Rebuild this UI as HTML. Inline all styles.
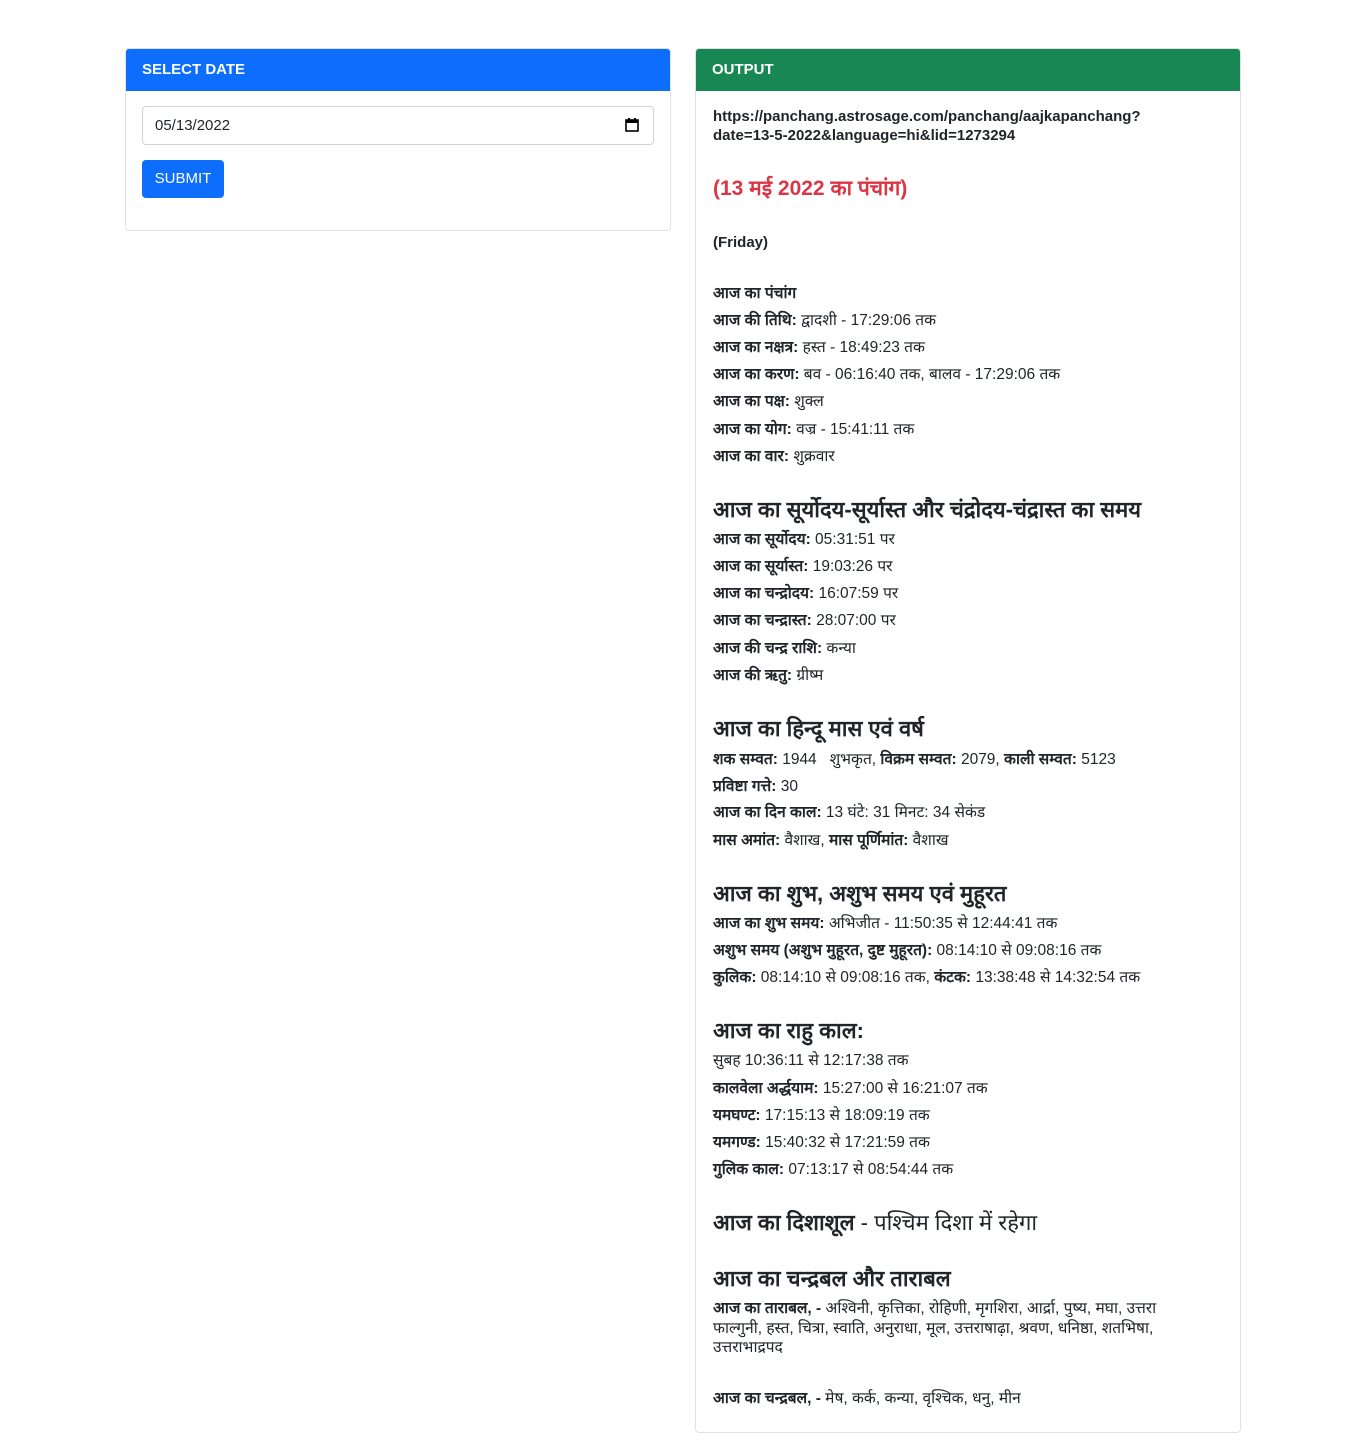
<!DOCTYPE html>
<html><head><meta charset="utf-8"><style>
*{box-sizing:border-box;margin:0;padding:0}
body{width:1366px;height:1433px;background:#fff;font-family:"Liberation Sans",sans-serif;color:#212529;position:relative;overflow:hidden}
.card{position:absolute;border:1px solid #dee2e6;border-radius:4px;background:#fff}
.hd{height:42px;color:#fff;font-weight:bold;font-size:15px;line-height:42px;padding-left:16px;border-radius:3px 3px 0 0}
.l{position:absolute;left:17px;font-size:15.5px;line-height:20px;white-space:nowrap}
.h{font-size:22px;font-weight:bold;line-height:28px}
b{font-weight:bold}
</style></head><body>
<div class="card" style="left:125px;top:48px;width:546px;height:183px">
 <div class="hd" style="background:#0d6efd">SELECT DATE</div>
 <div style="position:absolute;left:16px;top:57px;width:512px;height:39px;border:1px solid #ced4da;border-radius:4px;font-size:15px;line-height:37px;padding-left:12px">05/13/2022
  <svg style="position:absolute;right:14px;top:11px" width="14" height="14" viewBox="0 0 14 14"><rect x="1" y="2" width="12" height="11" fill="none" stroke="#000" stroke-width="1.6"/><rect x="1" y="2" width="12" height="3" fill="#000"/><rect x="3" y="0" width="2" height="3" fill="#000"/><rect x="9" y="0" width="2" height="3" fill="#000"/></svg>
 </div>
 <div style="position:absolute;left:16px;top:111px;width:82px;height:38px;background:#0d6efd;border-radius:4px;color:#fff;font-size:15px;line-height:38px;text-align:center">SUBMIT</div>
</div>
<div class="card" style="left:695px;top:48px;width:546px;height:1385px">
 <div class="hd" style="background:#198754">OUTPUT</div>
 <div class="l" style="top:58px;font-weight:bold;white-space:normal;width:500px;line-height:19px;font-size:15px">https://panchang.astrosage.com/panchang/aajkapanchang?<br>date=13-5-2022&amp;language=hi&amp;lid=1273294</div>
 <div class="l" style="top:126px;color:#dc3545;font-size:21px;line-height:28px;font-weight:bold">(13 मई 2022 का पंचांग)</div>
 <div class="l" style="top:184px;font-weight:bold;font-size:15px">(Friday)</div>
 <div class="l" style="top:235px"><b>आज का पंचांग</b></div>
 <div class="l" style="top:262px"><b>आज की तिथि:</b> द्वादशी - 17:29:06 तक</div>
 <div class="l" style="top:289px"><b>आज का नक्षत्र:</b> हस्त - 18:49:23 तक</div>
 <div class="l" style="top:316px"><b>आज का करण:</b> बव - 06:16:40 तक, बालव - 17:29:06 तक</div>
 <div class="l" style="top:343px"><b>आज का पक्ष:</b> शुक्ल</div>
 <div class="l" style="top:371px"><b>आज का योग:</b> वज्र - 15:41:11 तक</div>
 <div class="l" style="top:398px"><b>आज का वार:</b> शुक्रवार</div>
 <div class="l h" style="top:447px">आज का सूर्योदय-सूर्यास्त और चंद्रोदय-चंद्रास्त का समय</div>
 <div class="l" style="top:481px"><b>आज का सूर्योदय:</b> 05:31:51 पर</div>
 <div class="l" style="top:508px"><b>आज का सूर्यास्त:</b> 19:03:26 पर</div>
 <div class="l" style="top:535px"><b>आज का चन्द्रोदय:</b> 16:07:59 पर</div>
 <div class="l" style="top:562px"><b>आज का चन्द्रास्त:</b> 28:07:00 पर</div>
 <div class="l" style="top:590px"><b>आज की चन्द्र राशि:</b> कन्या</div>
 <div class="l" style="top:617px"><b>आज की ऋतु:</b> ग्रीष्म</div>
 <div class="l h" style="top:666px">आज का हिन्दू मास एवं वर्ष</div>
 <div class="l" style="top:701px"><b>शक सम्वत:</b> 1944 &nbsp; शुभकृत, <b>विक्रम सम्वत:</b> 2079, <b>काली सम्वत:</b> 5123</div>
 <div class="l" style="top:728px"><b>प्रविष्टा गत्ते:</b> 30</div>
 <div class="l" style="top:754px"><b>आज का दिन काल:</b> 13 घंटे: 31 मिनट: 34 सेकंड</div>
 <div class="l" style="top:782px"><b>मास अमांत:</b> वैशाख, <b>मास पूर्णिमांत:</b> वैशाख</div>
 <div class="l h" style="top:831px">आज का शुभ, अशुभ समय एवं मुहूरत</div>
 <div class="l" style="top:865px"><b>आज का शुभ समय:</b> अभिजीत - 11:50:35 से 12:44:41 तक</div>
 <div class="l" style="top:892px"><b>अशुभ समय (अशुभ मुहूरत, दुष्ट मुहूरत):</b> 08:14:10 से 09:08:16 तक</div>
 <div class="l" style="top:919px"><b>कुलिक:</b> 08:14:10 से 09:08:16 तक, <b>कंटक:</b> 13:38:48 से 14:32:54 तक</div>
 <div class="l h" style="top:968px">आज का राहु काल:</div>
 <div class="l" style="top:1002px">सुबह 10:36:11 से 12:17:38 तक</div>
 <div class="l" style="top:1030px"><b>कालवेला अर्द्धयाम:</b> 15:27:00 से 16:21:07 तक</div>
 <div class="l" style="top:1057px"><b>यमघण्ट:</b> 17:15:13 से 18:09:19 तक</div>
 <div class="l" style="top:1084px"><b>यमगण्ड:</b> 15:40:32 से 17:21:59 तक</div>
 <div class="l" style="top:1111px"><b>गुलिक काल:</b> 07:13:17 से 08:54:44 तक</div>
 <div class="l h" style="top:1160px">आज का दिशाशूल <span style="font-weight:normal">- पश्चिम दिशा में रहेगा</span></div>
 <div class="l h" style="top:1216px">आज का चन्द्रबल और ताराबल</div>
 <div class="l" style="top:1250px;line-height:19.5px"><b>आज का ताराबल, -</b> अश्विनी, कृत्तिका, रोहिणी, मृगशिरा, आर्द्रा, पुष्य, मघा, उत्तरा<br>फाल्गुनी, हस्त, चित्रा, स्वाति, अनुराधा, मूल, उत्तराषाढ़ा, श्रवण, धनिष्ठा, शतभिषा,<br>उत्तराभाद्रपद</div>
 <div class="l" style="top:1340px"><b>आज का चन्द्रबल, -</b> मेष, कर्क, कन्या, वृश्चिक, धनु, मीन</div>
</div>
</body></html>
